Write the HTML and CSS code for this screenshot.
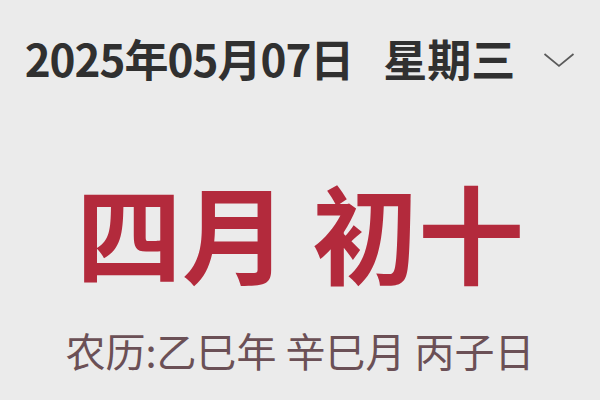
FILE: index.html
```html
<!DOCTYPE html>
<html lang="zh-CN">
<head>
<meta charset="utf-8">
<link rel="stylesheet" href="styles.css">
</head>
<body>
<div class="page">
  <div class="header">
    <span class="date">2025年05月07日</span>
    <span class="week">星期三</span>
    <svg class="chev" width="32" height="16" viewBox="0 0 32 16"><path d="M1.5 2 L16 14 L30.5 2" fill="none" stroke="#5a5a5a" stroke-width="1.7"/></svg>
  </div>
  <div class="lunar">四月 初十</div>
  <div class="ganzhi">农历:乙巳年 辛巳月 丙子日</div>
</div>
</body>
</html>
```
FILE: styles.css
```css
html, body { margin: 0; padding: 0; }
body {
  width: 600px; height: 400px; overflow: hidden;
  background: #ebebeb;
  font-family: "Noto Sans CJK SC", "Noto Sans", sans-serif;
}
.page { display: flex; flex-direction: column; align-items: center; }
.header {
  display: flex; align-items: center;
  margin-top: 32px; height: 52px; line-height: 52px;
  color: #303030; font-weight: 700; font-size: 44px;
}
.date { letter-spacing: -1px; }
.week { margin-left: 30px; }
.chev { margin-left: 28px; margin-top: 4px; }
.lunar {
  margin-top: 91px;
  color: #b32a3c; font-weight: 700; font-size: 106px; line-height: 110px;
}
.ganzhi {
  margin-top: 41px;
  color: #6b5056; font-size: 40px; font-weight: 400; line-height: 48px;
}
```
